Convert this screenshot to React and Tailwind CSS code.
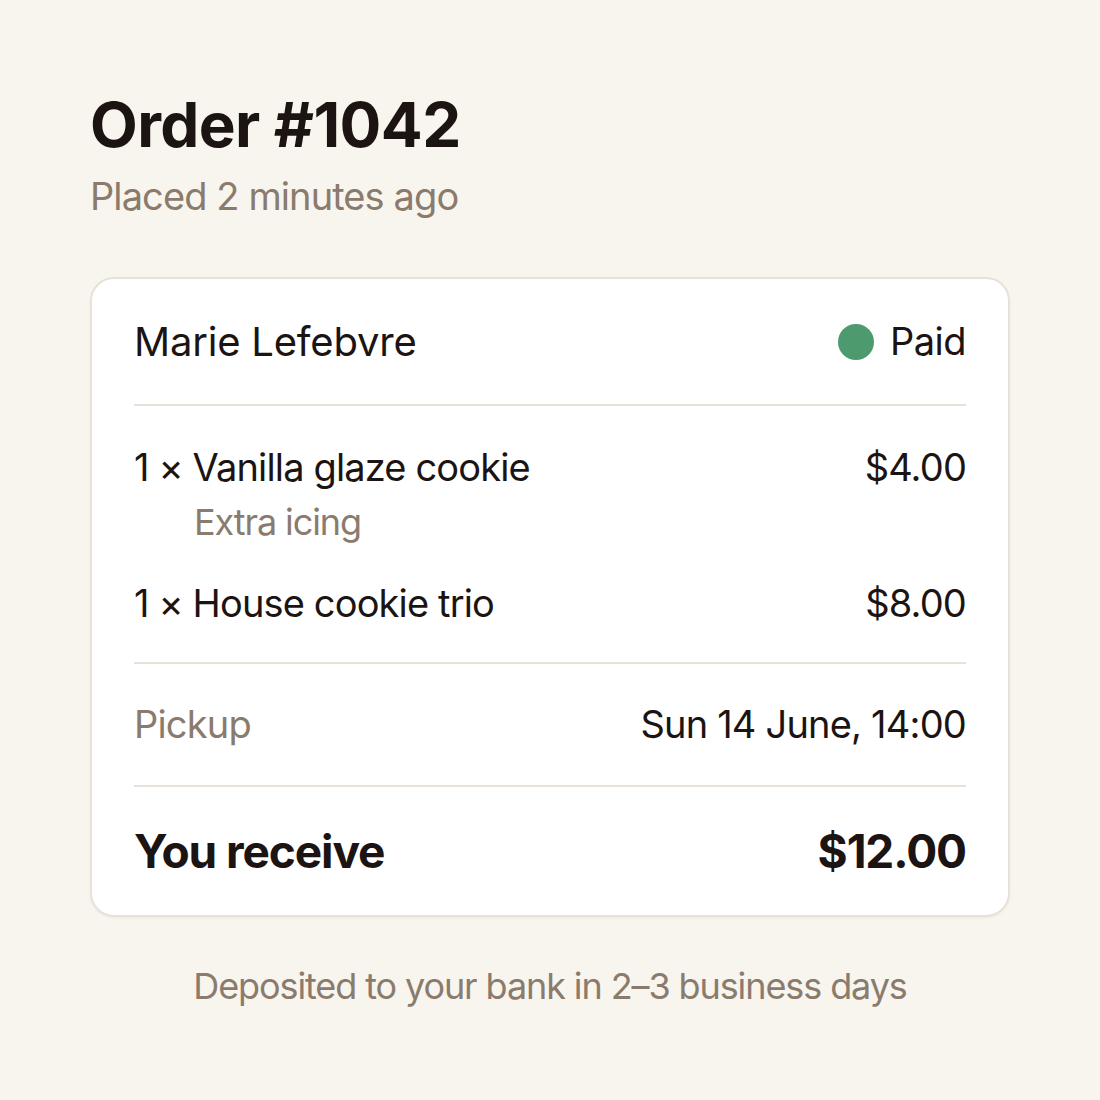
import React from 'react';

const items = [
  { qty: 1, name: 'Vanilla glaze cookie', note: 'Extra icing', price: '$4.00' },
  { qty: 1, name: 'House cookie trio', price: '$8.00' },
];

function App() {
  return (
    <div
      className="min-h-screen bg-[#f8f5ef] px-[90px] pt-[86px] text-[#1c1412]"
      style={{ fontFamily: 'Inter, "Noto Sans", sans-serif' }}
    >
      <h1 className="text-[62px] font-bold leading-[78px] tracking-[-0.6px]">Order #1042</h1>
      <p className="mt-[8px] text-[38px] leading-[48px] tracking-[-0.9px] text-[#8a7b6d]">Placed 2 minutes ago</p>

      <div className="mt-[57px] rounded-[24px] border-2 border-[#e8e1d8] bg-white px-[42px] shadow-[0_1px_2px_rgba(120,100,80,0.08)]">
        <div className="flex h-[125px] items-center justify-between">
          <span className="text-[40px] tracking-[-0.2px]">Marie Lefebvre</span>
          <span className="flex items-center gap-[16px] text-[38px] tracking-[-0.5px]">
            <span className="h-[36px] w-[36px] rounded-full bg-[#4c9a6e]" />
            Paid
          </span>
        </div>

        <div className="border-t-2 border-[#e8e1d8] pt-[34px] pb-[32px] tracking-[-0.85px]">
          {items.map((item, i) => (
            <div key={i} className={i > 0 ? 'mt-[26px]' : ''}>
              <div className="flex justify-between text-[38px] leading-[54px]">
                <span>
                  {item.qty} × {item.name}
                </span>
                <span>{item.price}</span>
              </div>
              {item.note && (
                <div className="pl-[60px] text-[36px] leading-[56px] tracking-[-1.1px] text-[#8a7b6d]">{item.note}</div>
              )}
            </div>
          ))}
        </div>

        <div className="flex h-[123px] items-center justify-between border-t-2 border-[#e8e1d8] text-[38px] tracking-[-0.8px]">
          <span className="text-[#8a7b6d]">Pickup</span>
          <span>Sun 14 June, 14:00</span>
        </div>

        <div className="flex h-[130px] items-center justify-between border-t-2 border-[#e8e1d8] text-[46px] font-bold tracking-[-1.1px]">
          <span>You receive</span>
          <span>$12.00</span>
        </div>
      </div>

      <p className="mt-[42px] text-center text-[36px] tracking-[-1.1px] text-[#8a7b6d]">
        Deposited to your bank in 2–3 business days
      </p>
    </div>
  );
}

export default App;
